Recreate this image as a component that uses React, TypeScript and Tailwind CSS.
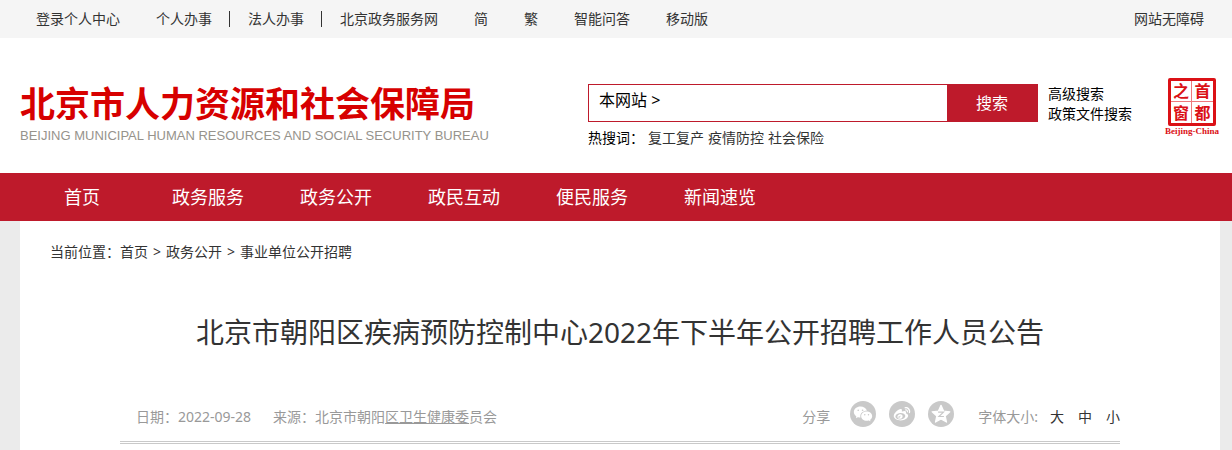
import React from 'react';
import { RiWechatFill, RiWeiboFill } from 'react-icons/ri';

type TopLink = {
  label: string;
  divider?: boolean;
};

const topLinks: TopLink[] = [
  { label: '登录个人中心' },
  { label: '个人办事', divider: true },
  { label: '法人办事', divider: true },
  { label: '北京政务服务网' },
  { label: '简' },
  { label: '繁' },
  { label: '智能问答' },
  { label: '移动版' },
];

const navItems = ['政务服务', '政务公开', '政民互动', '便民服务', '新闻速览'];
const hotWords = ['复工复产', '疫情防控', '社会保险'];
const crumbs = ['首页', '政务公开', '事业单位公开招聘'];
const sealChars = ['之', '首', '窗', '都'];
const fontSizes = ['大', '中', '小'];

const TopBar = () => (
  <div className="flex h-[38px] items-center justify-between bg-[#f5f5f5] pr-7 pl-[18px] text-sm text-[#333]">
    <ul className="flex items-center">
      {topLinks.map((link) => (
        <li
          key={link.label}
          className={link.divider ? 'border-r border-[#333] pr-[17px] pl-[18px] leading-4' : 'px-[18px] leading-4'}
        >
          <a href="#">{link.label}</a>
        </li>
      ))}
    </ul>
    <a href="#">网站无障碍</a>
  </div>
);

const Logo = () => (
  <a href="#" className="block whitespace-nowrap">
    <span className="block text-[35px] leading-9 font-bold text-[#d70000]">北京市人力资源和社会保障局</span>
    <span className="mt-1 block font-['Liberation_Sans',Arial,sans-serif] text-[13px] leading-5 text-[#96938c]">
      BEIJING MUNICIPAL HUMAN RESOURCES AND SOCIAL SECURITY BUREAU
    </span>
  </a>
);

const Search = () => (
  <form className="w-[450px]" onSubmit={(e) => e.preventDefault()}>
    <div className="flex h-[38px] border border-[#be1a2b]">
      <button type="button" className="h-[30px] px-[10px] text-base text-black">
        本网站 &gt;
      </button>
      <input type="text" aria-label="搜索内容" className="min-w-0 flex-1 outline-none" />
      <button type="submit" className="w-[90px] bg-[#be1a2b] text-base text-white">
        搜索
      </button>
    </div>
    <div className="mt-1.5 flex text-sm text-[#333]">
      <span className="w-[60px] text-black">热搜词：</span>
      <span className="flex gap-1">
        {hotWords.map((word) => (
          <a key={word} href="#">{word}</a>
        ))}
      </span>
    </div>
  </form>
);

const Seal = () => (
  <a href="#" className="flex w-14 flex-col items-center text-[#db1116]">
    <span className="grid grid-cols-2 rounded-[2px] border-[3px] border-[#db1116]">
      {sealChars.map((char, i) => (
        <span
          key={char}
          className={`flex h-[21px] w-[21px] items-center justify-center border-[#ee7a7d] text-base leading-5 font-bold ${
            i % 2 === 0 ? 'border-r' : ''
          } ${i < 2 ? 'border-b' : ''}`}
        >
          {char}
        </span>
      ))}
    </span>
    <span className="font-['Liberation_Serif',serif] text-[9px] leading-[10px] font-bold">Beijing-China</span>
  </a>
);

const Header = () => (
  <header className="flex items-start bg-white pr-3 pl-5 text-sm">
    <div className="w-[46%] shrink-0 pt-12">
      <Logo />
    </div>
    <div className="ml-auto flex h-[135px] pt-[46px]">
      <Search />
      <div className="ml-[10px] flex flex-col leading-5 text-black">
        <a href="#">高级搜索</a>
        <a href="#">政策文件搜索</a>
      </div>
    </div>
    <div className="ml-8 pt-10">
      <Seal />
    </div>
  </header>
);

const Nav = () => (
  <nav className="bg-[#be1a2b] pl-5 text-lg leading-[48px] text-white">
    <ul className="flex text-center">
      <li className="w-[124px]"><a href="#">首页</a></li>
      {navItems.map((item) => (
        <li key={item} className="w-32"><a href="#">{item}</a></li>
      ))}
    </ul>
  </nav>
);

const QzoneIcon = () => (
  <svg viewBox="0 0 24 24" className="h-5 w-5">
    <path
      d="M12 1.6l3.1 6.9 7.5.8-5.6 5 1.6 7.4-6.6-3.8-6.6 3.8L7 14.3l-5.6-5 7.5-.8z"
      fill="#fff"
      stroke="#fff"
      strokeWidth="1.5"
      strokeLinejoin="round"
    />
    <path d="M8.500 9.800h6.500l-5.500 5.200h6" fill="none" stroke="#c9c9c9" strokeWidth="1.4" />
  </svg>
);

const Share = () => (
  <div className="flex items-center gap-[13px]">
    <span className="mr-[7px] pt-1.5">分享</span>
    <button type="button" aria-label="微信" className="flex h-[26px] w-[26px] items-center justify-center rounded-full bg-[#c9c9c9] text-white">
      <RiWechatFill size={20} />
    </button>
    <button type="button" aria-label="微博" className="flex h-[26px] w-[26px] items-center justify-center rounded-full bg-[#c9c9c9] text-white">
      <RiWeiboFill size={18} />
    </button>
    <button type="button" aria-label="QQ空间" className="flex h-[26px] w-[26px] items-center justify-center rounded-full bg-[#c9c9c9] text-white">
      <QzoneIcon />
    </button>
  </div>
);

const Article = () => (
  <main className="bg-white pb-6">
    <div className="flex px-[30px] pt-[19px] text-sm leading-6 text-[#333]">
      <span>当前位置：</span>
      {crumbs.map((crumb, i) => (
        <React.Fragment key={crumb}>
          {i > 0 && <span className="w-[18px] text-center">&gt;</span>}
          <a href="#">{crumb}</a>
        </React.Fragment>
      ))}
    </div>
    <div className="px-[100px]">
      <h1 className="mt-12 text-center text-[28px] leading-10 text-[#333]">
        北京市朝阳区疾病预防控制中心2022年下半年公开招聘工作人员公告
      </h1>
      <div className="mt-[49px] flex items-center border-b-[3px] border-double border-[#c9c9c9] pb-3.5 pl-4 text-sm text-[#999]">
        <span className="mr-[22px] pt-1.5">日期：2022-09-28</span>
        <span className="pt-1.5">
          来源：北京市朝阳<span className="underline underline-offset-1">区卫生健康委</span>员会
        </span>
        <div className="ml-auto flex items-center">
          <Share />
          <div className="ml-6 flex items-center pt-1.5">
            <span>字体大小:</span>
            <div className="ml-3 flex gap-3.5 text-[#333]">
              {fontSizes.map((size) => (
                <button key={size} type="button">{size}</button>
              ))}
            </div>
          </div>
        </div>
      </div>
    </div>
  </main>
);

const App: React.FC = () => (
  <div className="min-h-screen bg-[#ebebeb] font-['Noto_Sans','Noto_Sans_CJK_SC',sans-serif]">
    <TopBar />
    <Header />
    <Nav />
    <div className="pr-3 pl-5">
      <Article />
    </div>
  </div>
);

export default App;
